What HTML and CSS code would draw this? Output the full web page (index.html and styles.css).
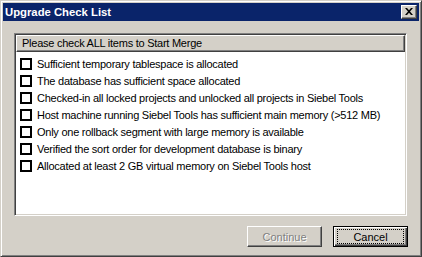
FILE: index.html
```html
<!DOCTYPE html>
<html lang="en">
<head>
  <meta charset="UTF-8">
  <title>Upgrade Check List</title>
  <link rel="stylesheet" href="styles.css">
</head>
<body>
  <div class="window">
    <div class="titlebar">
      <span class="title">Upgrade Check List</span>
      <button class="close-btn" title="Close">
        <svg width="8" height="7" viewBox="0 0 8 7">
          <path d="M0 0h2l2 2.2L6 0h2L5 3.5 8 7H6L4 4.8 2 7H0l3-3.5z" fill="#000"/>
        </svg>
      </button>
    </div>

    <div class="listview">
      <div class="list-header">Please check ALL items to Start Merge</div>
      <ul class="items">
        <li><span class="check"></span>Sufficient temporary tablespace is allocated</li>
        <li><span class="check"></span>The database has sufficient space allocated</li>
        <li><span class="check"></span>Checked-in all locked projects and unlocked all projects in Siebel Tools</li>
        <li><span class="check"></span>Host machine running Siebel Tools has sufficient main memory (&gt;512 MB)</li>
        <li><span class="check"></span>Only one rollback segment with large memory is available</li>
        <li><span class="check"></span>Verified the sort order for development database is binary</li>
        <li><span class="check"></span>Allocated at least 2 GB virtual memory on Siebel Tools host</li>
      </ul>
    </div>

    <div class="buttons">
      <button class="btn" disabled>Continue</button>
      <button class="btn default"><span class="focus">Cancel</span></button>
    </div>
  </div>
</body>
</html>
```

FILE: styles.css
```css
body {
  margin: 0;
  padding: 0;
  background: #d4d0c8;
  font-family: 'Liberation Sans', Arial, sans-serif;
  font-size: 11px;
  color: #000;
}

.window {
  width: 422px;
  height: 257px;
  box-sizing: border-box;
  background: #d4d0c8;
  border: 1px solid;
  border-color: #d4d0c8 #404040 #404040 #d4d0c8;
  box-shadow: inset 1px 1px #fff, inset -1px -1px #808080;
  padding: 2px;
}

.titlebar {
  height: 18px;
  background: #0a246a;
  display: flex;
  align-items: center;
  justify-content: space-between;
  padding: 0 2px 0 2px;
}

.title {
  color: #fff;
  font-weight: bold;
  font-size: 11.3px;
}

.close-btn {
  width: 16px;
  height: 14px;
  padding: 0;
  margin: 0;
  background: #d4d0c8;
  border: 1px solid;
  border-color: #fff #404040 #404040 #fff;
  box-shadow: inset -1px -1px #808080;
  display: flex;
  align-items: center;
  justify-content: center;
  box-sizing: border-box;
}

.close-btn svg {
  display: block;
  margin: 0 1px 1px 0;
}

.listview {
  height: 183px;
  margin: 12px 12px 0 11px;
  box-sizing: border-box;
  background: #fff;
  border: 1px solid;
  border-color: #808080 #fff #fff #808080;
  box-shadow: inset 1px 1px #404040, inset -1px -1px #d4d0c8;
  padding: 1px;
}

.list-header {
  height: 17px;
  box-sizing: border-box;
  background: #d4d0c8;
  border: 1px solid;
  border-color: #fff #404040 #404040 #fff;
  box-shadow: inset -1px -1px #808080;
  padding: 0 5px;
  line-height: 14px;
  letter-spacing: -0.25px;
  white-space: nowrap;
}

.items {
  list-style: none;
  margin: 0;
  padding: 3px 0 0 4px;
}

.items li {
  height: 17px;
  display: flex;
  align-items: center;
  gap: 5px;
  letter-spacing: -0.25px;
  white-space: nowrap;
}

.check {
  width: 12px;
  height: 12px;
  box-sizing: border-box;
  border: 2px solid #000;
  background: #fff;
  flex: none;
}

.buttons {
  display: flex;
  justify-content: flex-end;
  gap: 11px;
  margin: 10px 11px 0 0;
}

.btn {
  width: 75px;
  height: 21px;
  box-sizing: border-box;
  padding: 0;
  background: #d4d0c8;
  border: 1px solid;
  border-color: #fff #404040 #404040 #fff;
  box-shadow: inset -1px -1px #808080;
  font-family: 'Liberation Sans', Arial, sans-serif;
  font-size: 11px;
  color: #000;
}

.btn:disabled {
  color: #808080;
  text-shadow: 1px 1px #fff;
}

.btn.default {
  border: 1px solid #000;
  box-shadow: inset 1px 1px #fff, inset -1px -1px #404040, inset -2px -2px #808080;
  padding: 2px 3px 2px 3px;
}

.focus {
  display: flex;
  align-items: center;
  justify-content: center;
  height: 100%;
  box-sizing: border-box;
  border: 1px dotted #000;
}
```
